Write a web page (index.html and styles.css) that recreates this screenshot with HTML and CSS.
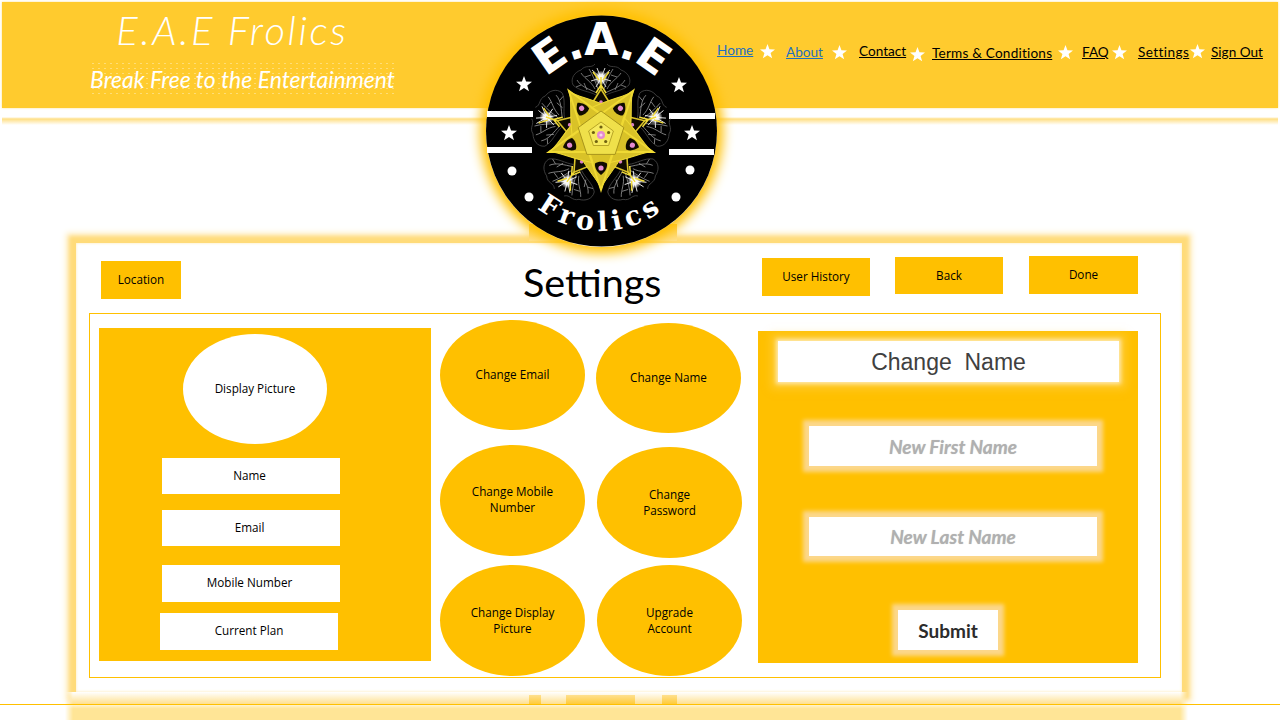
FILE: index.html
```html
<!DOCTYPE html>
<html lang="en">
<head>
    <meta charset="UTF-8">
    <title>E.A.E Frolics - Settings</title>
    <link rel="stylesheet" href="styles.css">
</head>
<body>
<svg class="defs" width="0" height="0">
    <symbol id="star" viewBox="0 0 20 20">
        <polygon points="10,0 12.6,7 20,7.3 14.1,11.9 16.2,19 10,14.9 3.8,19 5.9,11.9 0,7.3 7.4,7"/>
    </symbol>
</svg>

<div class="page">
    <header class="top">
        <div class="brand">
            <div class="brand-name">E.A.E Frolics</div>
            <div class="brand-tag">Break Free to the Entertainment</div>
        </div>
        <nav class="nav">
            <a class="link-blue n1" href="#">Home</a><svg class="star s1"><use href="#star"/></svg>
            <a class="link-blue n2" href="#">About</a><svg class="star s2"><use href="#star"/></svg>
            <a class="n3" href="#">Contact</a><svg class="star s3"><use href="#star"/></svg>
            <a class="n4" href="#">Terms &amp; Conditions</a><svg class="star s4"><use href="#star"/></svg>
            <a class="n5" href="#">FAQ</a><svg class="star s5"><use href="#star"/></svg>
            <a class="n6" href="#">Settings</a><svg class="star s6"><use href="#star"/></svg>
            <a class="n7" href="#">Sign Out</a>
        </nav>
    </header>
    <div class="top-line"></div>

    <div class="panel">
        <div class="toolbar">
            <div class="btn btn-location">Location</div>
            <h1 class="title">Settings</h1>
            <div class="btn btn-history">User History</div>
            <div class="btn btn-back">Back</div>
            <div class="btn btn-done">Done</div>
        </div>

        <div class="content">
            <div class="profile">
                <div class="avatar">Display Picture</div>
                <div class="field f-name">Name</div>
                <div class="field f-email">Email</div>
                <div class="field f-mobile">Mobile Number</div>
                <div class="field f-plan">Current Plan</div>
            </div>

            <div class="col col-a">
                <div class="oval o1">Change Email</div>
                <div class="oval o2">Change Mobile<br>Number</div>
                <div class="oval o3">Change Display<br>Picture</div>
            </div>
            <div class="col col-b">
                <div class="oval o4">Change Name</div>
                <div class="oval o5">Change<br>Password</div>
                <div class="oval o6">Upgrade<br>Account</div>
            </div>

            <div class="form">
                <div class="form-title">Change&nbsp; Name</div>
                <div class="input i-first">New First Name</div>
                <div class="input i-last">New Last Name</div>
                <div class="submit">Submit</div>
            </div>
        </div>
    </div>

    <footer class="bottom">
        <div class="bottom-glow">
            <span class="tab t1"></span>
            <span class="tab t2"></span>
            <span class="tab t3"></span>
        </div>
        <div class="bottom-rule"></div>
        <div class="bottom-band"></div>
    </footer>

    <div class="logo-tab"></div>
    <div class="logo">
        <svg viewBox="16 15 231 232" width="231" height="232">
            <defs>
                <path id="arc-top" d="M 55 131 A 76 76 0 0 1 207 131"/>
                <path id="arc-bottom" d="M 31 131 A 100 100 0 0 0 231 131"/>
                <radialGradient id="core">
                    <stop offset="0" stop-color="#fff"/>
                    <stop offset="0.5" stop-color="#fff" stop-opacity="0.9"/>
                    <stop offset="1" stop-color="#fff" stop-opacity="0"/>
                </radialGradient>
                <g id="wisp">
                    <path class="wing" d="M-5 -40 C-12 -44 -22 -44 -28 -50 C-31 -57 -26 -63 -20 -65 C-15 -71 -10 -66 -6 -71 M5 -40 C12 -44 22 -44 28 -50 C31 -57 26 -63 20 -65 C15 -71 10 -66 6 -71"/>
                    <path class="wing-in" d="M-4 -42 C-12 -46 -20 -48 -24 -55 M4 -42 C12 -46 20 -48 24 -55 M-6 -46 C-10 -54 -16 -56 -20 -62 M6 -46 C10 -54 16 -56 20 -62 M-3 -46 C-6 -54 -8 -60 -12 -66 M3 -46 C6 -54 8 -60 12 -66 M-14 -45 L-17 -52 M14 -45 L17 -52 M-16 -58 L-10 -60 M16 -58 L10 -60 M-20 -50 L-25 -48 M20 -50 L25 -48"/>
                    <path class="strand" d="M0 -57 L-9 -65 M0 -57 L9 -65 M0 -57 L-4 -67 M0 -57 L4 -67 M0 -57 L-10 -54 M0 -57 L10 -54 M0 -57 L-5 -48 M0 -57 L5 -48"/>
                    <ellipse cx="0" cy="-57" rx="6.5" ry="7.5" fill="url(#core)"/>
                    <path class="spike" d="M0 -38 L0 -58 M-5 -42 L0 -50 L5 -42 M-8 -63 L-2 -55 M8 -63 L2 -55"/>
                </g>
                <g id="arm">
                    <path class="arm" d="M0 54 C3 45 13 36 24 16 L-24 16 C-13 36 -3 45 0 54 Z"/>
                    <path class="pocket" d="M0 40 C4 37 6.5 33 6 28.5 C3 26 -3 26 -6 28.5 C-6.5 33 -4 37 0 40 Z"/>
                    <circle cx="0" cy="33" r="2.6" fill="#e58bd0"/>
                </g>
                <g id="speck">
                    <path class="pocket-line" d="M0 -46 L-13 -25 Q0 -19 13 -25 Z"/>
                    <circle cx="0" cy="-33" r="1.8" fill="#d97fc4"/>
                    <path class="tie" d="M-32 -44 L-13 -25 M32 -44 L13 -25 M-22 -16 L-32 -44 M22 -16 L32 -44"/>
                </g>
            </defs>

            <circle cx="131.5" cy="131" r="115.5" fill="#000"/>

            <rect class="bar" x="17" y="111" width="46" height="6"/>
            <rect class="bar" x="17" y="147" width="45" height="6"/>
            <rect class="bar" x="199" y="113" width="46" height="6"/>
            <rect class="bar" x="199" y="149" width="45" height="6"/>

            <use href="#star" class="logo-star" x="46" y="76" width="16" height="16"/>
            <use href="#star" class="logo-star" x="201" y="77" width="16" height="16"/>
            <use href="#star" class="logo-star" x="31" y="125" width="16" height="16"/>
            <use href="#star" class="logo-star" x="214" y="125" width="16" height="16"/>

            <circle class="pip" cx="42" cy="171" r="4.5"/>
            <circle class="pip" cx="220" cy="170" r="4.5"/>
            <circle class="pip" cx="59" cy="197" r="4.5"/>
            <circle class="pip" cx="206" cy="197" r="4.5"/>

            <g transform="translate(131 135)">
                <use href="#wisp"/>
                <use href="#wisp" transform="rotate(72)"/>
                <use href="#wisp" transform="rotate(144)"/>
                <use href="#wisp" transform="rotate(216)"/>
                <use href="#wisp" transform="rotate(288)"/>

                <use href="#speck"/>
                <use href="#speck" transform="rotate(72)"/>
                <use href="#speck" transform="rotate(144)"/>
                <use href="#speck" transform="rotate(216)"/>
                <use href="#speck" transform="rotate(288)"/>

                <use href="#arm"/>
                <use href="#arm" transform="rotate(72)"/>
                <use href="#arm" transform="rotate(144)"/>
                <use href="#arm" transform="rotate(216)"/>
                <use href="#arm" transform="rotate(288)"/>

                <polygon class="star-line" points="0,55 -32.3,-44.5 52.3,17 -52.3,17 32.3,-44.5"/>
                <polygon class="heart" points="0,-24 22.8,-7.4 14.1,19.4 -14.1,19.4 -22.8,-7.4"/>
                <polygon class="heart-in" points="0,-13 12.4,-4 7.6,10.5 -7.6,10.5 -12.4,-4"/>
                <g class="seeds">
                    <circle cx="0" cy="-8" r="1.6"/>
                    <circle cx="7.6" cy="-2.5" r="1.6"/>
                    <circle cx="4.7" cy="6.5" r="1.6"/>
                    <circle cx="-4.7" cy="6.5" r="1.6"/>
                    <circle cx="-7.6" cy="-2.5" r="1.6"/>
                </g>
                <circle cx="0" cy="0" r="4" fill="#e58bd0"/>
                <circle cx="0" cy="0" r="1.6" fill="#f7d6ee"/>
            </g>

            <text class="logo-top"><textPath href="#arc-top" startOffset="50%" text-anchor="middle">E.A.E</textPath></text>
            <text class="logo-bottom"><textPath href="#arc-bottom" startOffset="50%" text-anchor="middle">Frolics</textPath></text>
        </svg>
    </div>
</div>
</body>
</html>
```

FILE: styles.css
```css
* {
    padding: 0;
    margin: 0;
    box-sizing: border-box;
}

body {
    background: #fff;
    font-family: "Open Sans", "Liberation Sans", sans-serif;
    font-size: 11.7px;
    color: #000;
    overflow: hidden;
}

.defs {
    position: absolute;
}

.page {
    position: relative;
    width: 1280px;
    height: 720px;
    overflow: hidden;
}

/* header */
.top {
    display: flex;
    height: 106px;
    margin: 2px 2px 0;
    background: #ffcb2e;
    box-shadow: 0 0 2px #ffe08a;
}

.brand {
    width: 305px;
    margin-left: 88px;
    color: #fff;
    text-align: center;
}

.brand-name {
    padding-right: 20px;
    padding-top: 5px;
    font-family: Lato, "Liberation Sans", sans-serif;
    font-style: italic;
    font-weight: 300;
    font-size: 40px;
    line-height: 46px;
    letter-spacing: 2.6px;
    white-space: nowrap;
}

.brand-tag {
    margin-top: 8px;
    font-family: Lato, "Liberation Sans", sans-serif;
    font-style: italic;
    font-size: 23px;
    line-height: 36px;
    white-space: nowrap;
    background-image: radial-gradient(rgba(255, 255, 255, 0.35) 0.6px, transparent 0.8px);
    background-size: 6px 5px;
}

.nav {
    display: flex;
    align-items: flex-start;
    margin-left: 322px;
    padding-top: 39px;
    font-family: Lato, "Liberation Sans", sans-serif;
    font-size: 13.6px;
    line-height: 18px;
    white-space: nowrap;
}

.nav a {
    color: #000;
    text-decoration: underline;
}

.nav .link-blue {
    color: #1f6fbf;
}

.star {
    width: 15px;
    height: 15px;
    fill: #fff;
}

.n1 { width: 37px; }
.n2 { width: 38px; margin-left: 11px; margin-top: 2px; }
.n3 { width: 47px; margin-left: 12px; margin-top: 1px; }
.n4 { width: 120px; margin-left: 7px; margin-top: 3px; letter-spacing: 0.2px; }
.n5 { width: 27px; margin-left: 9px; margin-top: 2px; }
.n6 { width: 50px; margin-left: 11px; margin-top: 2px; letter-spacing: 0.4px; }
.n7 { width: 51px; margin-left: 6px; margin-top: 2px; }

.s1 { margin-left: 6px; margin-top: 3px; }
.s2 { margin-left: 8px; margin-top: 4px; }
.s3 { margin-left: 4px; margin-top: 6px; }
.s4 { margin-left: 6px; margin-top: 4px; }
.s5 { margin-left: 3px; margin-top: 4px; }
.s6 { margin-left: 2px; margin-top: 3px; }

.top-line {
    height: 8px;
    margin: 9px 2px 0;
    background: linear-gradient(#fff, #ffdf85 25%, #fff);
}

/* main panel */
.panel {
    width: 1106px;
    height: 449px;
    margin: 118px 0 0 76px;
    background: #fff;
    box-shadow: inset 0 0 3px #ffe9b0, 0 0 4px 7px #ffdb79, 0 0 6px 10px #ffeec4;
}

.toolbar {
    display: flex;
    align-items: flex-start;
    height: 70px;
    padding: 13px 0 0 25px;
}

.btn {
    display: flex;
    align-items: center;
    justify-content: center;
    padding-bottom: 2px;
    background: #ffc000;
}

.btn-location { width: 80px; height: 38px; margin-top: 5px; }
.title {
    width: 137px;
    margin-left: 342px;
    font-family: Lato, "Liberation Sans", sans-serif;
    font-weight: 400;
    font-size: 39.5px;
    line-height: 52px;
    text-align: center;
    white-space: nowrap;
}
.btn-history { width: 108px; height: 38px; margin-left: 102px; margin-top: 2px; }
.btn-back { width: 108px; height: 37px; margin-left: 25px; margin-top: 1px; }
.btn-done { width: 109px; height: 38px; margin-left: 26px; }

.content {
    display: flex;
    align-items: flex-start;
    width: 1072px;
    height: 365px;
    margin-left: 13px;
    border: 1px solid #ffc000;
}

.profile {
    display: flex;
    flex-direction: column;
    width: 332px;
    height: 333px;
    margin: 14px 0 0 9px;
    background: #ffc000;
}

.avatar {
    display: flex;
    align-items: center;
    justify-content: center;
    width: 144px;
    height: 110px;
    margin: 6px 0 0 84px;
    padding-bottom: 3px;
    border-radius: 50%;
    background: #fff;
}

.field {
    display: flex;
    align-items: center;
    justify-content: center;
    width: 178px;
    height: 36px;
    margin-left: 63px;
    padding: 0 3px 3px 0;
    background: #fff;
}

.f-name { margin-top: 14px; }
.f-email { margin-top: 16px; }
.f-mobile { height: 37px; margin-top: 19px; }
.f-plan { height: 37px; margin-top: 11px; margin-left: 61px; padding-right: 0; }

.col {
    display: flex;
    flex-direction: column;
}

.col-a { margin-left: 9px; margin-top: 6px; }
.col-b { margin-left: 11px; margin-top: 9px; }

.oval {
    display: flex;
    align-items: center;
    justify-content: center;
    width: 145px;
    height: 111px;
    padding-bottom: 2px;
    border-radius: 50%;
    background: #ffc000;
    line-height: 16px;
    text-align: center;
}

.o1 { height: 110px; }
.o2 { margin-top: 15px; padding-bottom: 4px; }
.o3 { margin-top: 9px; }
.o4 { height: 110px; }
.o5 { margin-top: 14px; margin-left: 1px; }
.o6 { margin-top: 7px; margin-left: 1px; }

.form {
    display: flex;
    flex-direction: column;
    width: 380px;
    height: 332px;
    margin: 17px 0 0 16px;
    background: #ffc000;
}

.form-title {
    width: 341px;
    height: 41px;
    margin: 10px 0 0 20px;
    background: #fff;
    box-shadow: 0 0 4px 2px #ffe9b0, 0 0 8px 7px rgba(255, 214, 90, 0.5);
    font-family: "Liberation Sans", sans-serif;
    font-size: 23px;
    line-height: 42px;
    color: #404040;
    text-align: center;
}

.input {
    width: 288px;
    height: 40px;
    margin-left: 51px;
    background: #fff;
    box-shadow: 0 0 4px 6px #fcd78a;
    font-family: Lato, "Liberation Sans", sans-serif;
    font-style: italic;
    font-weight: 700;
    font-size: 19px;
    line-height: 41px;
    color: #b0b0b0;
    text-align: center;
    text-shadow: 0 0 1px #ccc;
}

.i-first { margin-top: 44px; }
.i-last { height: 39px; margin-top: 51px; line-height: 40px; }

.submit {
    width: 100px;
    height: 40px;
    margin: 54px 0 0 140px;
    background: #fff;
    box-shadow: 0 0 4px 6px #fcd78a;
    font-family: Lato, "Liberation Sans", sans-serif;
    font-weight: 700;
    font-size: 19px;
    line-height: 41px;
    color: #2c2c2c;
    text-align: center;
}

/* bottom strip under the panel */
.bottom-glow {
    display: flex;
    align-items: flex-end;
    width: 1123px;
    height: 12px;
    margin-left: 65px;
    background: linear-gradient(#fff, #ffe08f);
    -webkit-mask-image: linear-gradient(to right, transparent, #000 8px, #000 calc(100% - 8px), transparent);
    mask-image: linear-gradient(to right, transparent, #000 8px, #000 calc(100% - 8px), transparent);
}

.tab {
    height: 9px;
    background: linear-gradient(#ffe08f, #ffcb3a);
}

.t1 { width: 12px; margin-left: 464px; }
.t2 { width: 69px; margin-left: 25px; }
.t3 { width: 15px; margin-left: 27px; }

.bottom-rule {
    height: 1px;
    background: #ffc000;
}

.bottom-band {
    width: 1123px;
    height: 15px;
    margin-left: 65px;
    background: linear-gradient(#fff3cf, #ffe596 25%);
    -webkit-mask-image: linear-gradient(to right, transparent, #000 8px, #000 calc(100% - 8px), transparent);
    mask-image: linear-gradient(to right, transparent, #000 8px, #000 calc(100% - 8px), transparent);
}

/* round logo sits over the header and the panel */
.logo-tab {
    position: absolute;
    left: 529px;
    top: 224px;
    width: 148px;
    height: 17px;
    background: linear-gradient(#ffcf4a, #ffe08f);
}

.logo {
    position: absolute;
    left: 486px;
    top: 15px;
    width: 231px;
    height: 232px;
    border-radius: 50%;
    box-shadow: 0 0 12px 6px #ffc000;
}

.logo svg {
    display: block;
}

.bar,
.pip,
.logo-star {
    fill: #fff;
}

.wing {
    fill: none;
    stroke: #4e4e4e;
    stroke-width: 0.7;
}

.wing-in {
    fill: none;
    stroke: #a0a0a0;
    stroke-width: 0.7;
}

.strand {
    fill: none;
    stroke: #e6e6e6;
    stroke-width: 0.9;
}

.spike {
    fill: none;
    stroke: #f2dc3a;
    stroke-width: 1.5;
}

.star-line {
    fill: none;
    stroke: #f0da34;
    stroke-width: 1.8;
}

.arm {
    fill: #d9c228;
    stroke: #f0da34;
    stroke-width: 1;
}

.pocket {
    fill: #100c00;
}

.pocket-line {
    fill: #100c00;
    stroke: #d9c228;
    stroke-width: 1.6;
}

.tie {
    fill: none;
    stroke: #d9c228;
    stroke-width: 1.4;
}

.heart {
    fill: #efe04a;
    stroke: #a8941a;
}

.heart-in {
    fill: #f6ea5e;
    stroke: #a8941a;
    stroke-width: 0.8;
}

.seeds {
    fill: #6f6110;
}

.logo-top {
    font-family: "DejaVu Sans", sans-serif;
    font-weight: 700;
    font-size: 44px;
    letter-spacing: -1.5px;
    fill: #fff;
}

.logo-bottom {
    font-family: "DejaVu Serif", serif;
    font-weight: 700;
    font-size: 27px;
    letter-spacing: 5px;
    fill: #fff;
}
```
